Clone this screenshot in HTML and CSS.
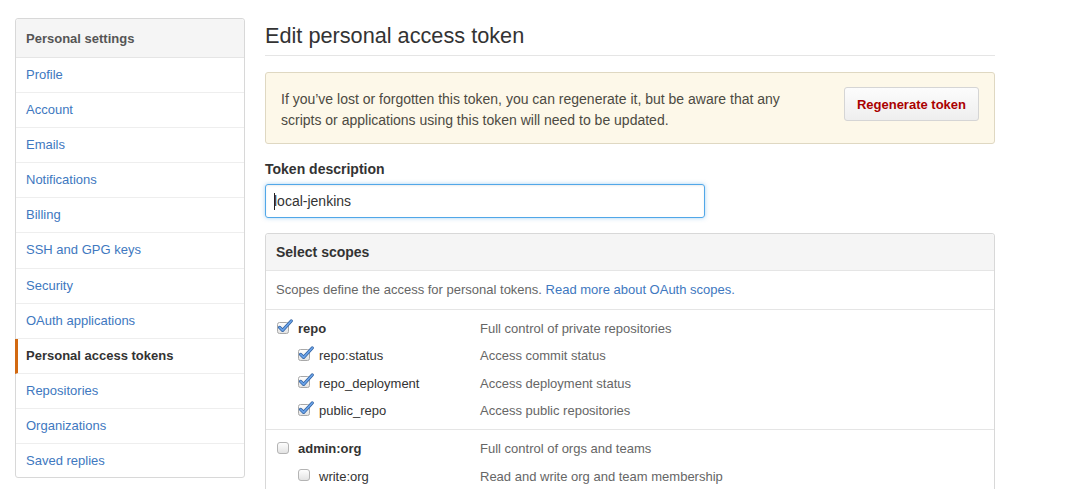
FILE: index.html
```html
<!DOCTYPE html>
<html>
<head>
<meta charset="utf-8">
<link rel="stylesheet" href="styles.css">
</head>
<body>
<div class="page">
  <nav class="menu">
    <div class="menu-heading">Personal settings</div>
    <a class="menu-item" href="#">Profile</a>
    <a class="menu-item" href="#">Account</a>
    <a class="menu-item" href="#">Emails</a>
    <a class="menu-item" href="#">Notifications</a>
    <a class="menu-item" href="#">Billing</a>
    <a class="menu-item" href="#">SSH and GPG keys</a>
    <a class="menu-item" href="#">Security</a>
    <a class="menu-item" href="#">OAuth applications</a>
    <a class="menu-item selected" href="#">Personal access tokens</a>
    <a class="menu-item" href="#">Repositories</a>
    <a class="menu-item" href="#">Organizations</a>
    <a class="menu-item last" href="#">Saved replies</a>
  </nav>

  <main class="main">
    <h2 class="subhead">Edit personal access token</h2>

    <div class="flash">
      <p class="flash-text">If you’ve lost or forgotten this token, you can regenerate it, but be aware that any scripts or applications using this token will need to be updated.</p>
      <button class="btn-danger">Regenerate token</button>
    </div>

    <div class="form-group">
      <label class="label">Token description</label>
      <div class="input"><span class="caret"></span>local-jenkins</div>
    </div>

    <div class="scopes">
      <div class="scopes-head">Select scopes</div>
      <div class="scopes-desc">Scopes define the access for personal tokens. <a href="#">Read more about OAuth scopes.</a></div>

      <div class="scope-group">
        <div class="scope-row">
          <div class="scope-name parent">
            <svg class="cb" width="18" height="16" viewBox="0 0 18 16"><defs><linearGradient id="g1" x1="0" y1="0" x2="0" y2="1"><stop offset="0" stop-color="#ffffff"/><stop offset="1" stop-color="#e2e2e2"/></linearGradient></defs><rect x="0.5" y="3.5" width="11" height="11" rx="2" fill="url(#g1)" stroke="#a8a8a8"/><path d="M2.6 8.4 L5.6 11.4 L14.2 2" fill="none" stroke="#2f5f9e" stroke-width="3.2" stroke-linecap="round" stroke-linejoin="round"/><path d="M2.6 8.4 L5.6 11.4 L14.2 2" fill="none" stroke="#6aa2e8" stroke-width="1.8" stroke-linecap="round" stroke-linejoin="round"/></svg>
            <strong>repo</strong>
          </div>
          <div class="scope-desc">Full control of private repositories</div>
        </div>
        <div class="scope-row">
          <div class="scope-name child">
            <svg class="cb" width="18" height="16" viewBox="0 0 18 16"><rect x="0.5" y="3.5" width="11" height="11" rx="2" fill="url(#g1)" stroke="#a8a8a8"/><path d="M2.6 8.4 L5.6 11.4 L14.2 2" fill="none" stroke="#2f5f9e" stroke-width="3.2" stroke-linecap="round" stroke-linejoin="round"/><path d="M2.6 8.4 L5.6 11.4 L14.2 2" fill="none" stroke="#6aa2e8" stroke-width="1.8" stroke-linecap="round" stroke-linejoin="round"/></svg>
            repo:status
          </div>
          <div class="scope-desc">Access commit status</div>
        </div>
        <div class="scope-row">
          <div class="scope-name child">
            <svg class="cb" width="18" height="16" viewBox="0 0 18 16"><rect x="0.5" y="3.5" width="11" height="11" rx="2" fill="url(#g1)" stroke="#a8a8a8"/><path d="M2.6 8.4 L5.6 11.4 L14.2 2" fill="none" stroke="#2f5f9e" stroke-width="3.2" stroke-linecap="round" stroke-linejoin="round"/><path d="M2.6 8.4 L5.6 11.4 L14.2 2" fill="none" stroke="#6aa2e8" stroke-width="1.8" stroke-linecap="round" stroke-linejoin="round"/></svg>
            repo_deployment
          </div>
          <div class="scope-desc">Access deployment status</div>
        </div>
        <div class="scope-row">
          <div class="scope-name child">
            <svg class="cb" width="18" height="16" viewBox="0 0 18 16"><rect x="0.5" y="3.5" width="11" height="11" rx="2" fill="url(#g1)" stroke="#a8a8a8"/><path d="M2.6 8.4 L5.6 11.4 L14.2 2" fill="none" stroke="#2f5f9e" stroke-width="3.2" stroke-linecap="round" stroke-linejoin="round"/><path d="M2.6 8.4 L5.6 11.4 L14.2 2" fill="none" stroke="#6aa2e8" stroke-width="1.8" stroke-linecap="round" stroke-linejoin="round"/></svg>
            public_repo
          </div>
          <div class="scope-desc">Access public repositories</div>
        </div>
      </div>

      <div class="scope-group">
        <div class="scope-row">
          <div class="scope-name parent">
            <svg class="cb" width="18" height="16" viewBox="0 0 18 16"><rect x="0.5" y="3.5" width="11" height="11" rx="2.5" fill="url(#g1)" stroke="#b4b4b4"/></svg>
            <strong>admin:org</strong>
          </div>
          <div class="scope-desc">Full control of orgs and teams</div>
        </div>
        <div class="scope-row">
          <div class="scope-name child">
            <svg class="cb" width="18" height="16" viewBox="0 0 18 16"><rect x="0.5" y="3.5" width="11" height="11" rx="2.5" fill="url(#g1)" stroke="#b4b4b4"/></svg>
            write:org
          </div>
          <div class="scope-desc">Read and write org and team membership</div>
        </div>
      </div>
    </div>
  </main>
</div>
</body>
</html>
```

FILE: styles.css
```css
* { box-sizing: border-box; }

body {
  margin: 0;
  background: #fff;
  font-family: "Liberation Sans", Arial, Helvetica, sans-serif;
  font-size: 13px;
  color: #333;
}

.page {
  display: flex;
  align-items: flex-start;
  gap: 20px;
  padding: 18px 0 0 15px;
}

/* Sidebar */
.menu {
  width: 230px;
  flex: none;
  border: 1px solid #d8d8d8;
  border-radius: 3px;
  display: flex;
  flex-direction: column;
  background: #fff;
}

.menu-heading {
  padding: 11px 10px 9px;
  line-height: 18px;
  font-size: 13px;
  font-weight: bold;
  color: #555;
  background: #f5f5f5;
  border-bottom: 1px solid #e5e5e5;
  border-radius: 3px 3px 0 0;
}

.menu-item {
  display: block;
  padding: 8px 10px;
  line-height: 18.1px;
  color: #4078c0;
  text-decoration: none;
  border-bottom: 1px solid #eee;
}

.menu-item.last { border-bottom: 0; padding-bottom: 7px; }

.menu-item.selected {
  font-weight: bold;
  color: #333;
  border-left: 3px solid #d26911;
  margin-left: -1px;
  padding-left: 8px;
}

/* Main */
.main {
  width: 730px;
  flex: none;
}

.subhead {
  margin: 0 0 16px;
  padding: 2px 0 4px;
  font-size: 21.7px;
  font-weight: normal;
  line-height: 31px;
  color: #333;
  border-bottom: 1px solid #e5e5e5;
}

.flash {
  display: flex;
  align-items: flex-start;
  justify-content: space-between;
  padding: 14px 15px 12px;
  background: #fdf8e9;
  border: 1px solid #dfd8c2;
  border-radius: 3px;
  color: #4c4a42;
  font-size: 14px;
}

.flash-text {
  margin: 0;
  padding-top: 2px;
  line-height: 21px;
  flex: 1;
  padding-right: 40px;
}

.btn-danger {
  flex: none;
  height: 34px;
  white-space: nowrap;
  font-family: inherit;
  font-size: 13px;
  font-weight: bold;
  color: #a00;
  background: linear-gradient(#fcfcfc, #eee);
  border: 1px solid #d5d5d5;
  border-radius: 3px;
  padding: 0 12px;
}

.form-group {
  margin-top: 15px;
}

.label {
  display: block;
  font-size: 14px;
  font-weight: bold;
  line-height: 20px;
  margin-bottom: 5px;
  color: #333;
}

.input {
  width: 440px;
  height: 34px;
  padding: 0 8px;
  display: flex;
  align-items: center;
  font-size: 14px;
  color: #333;
  border: 1px solid #51a7e8;
  border-radius: 3px;
  box-shadow: inset 0 1px 2px rgba(0,0,0,0.075), 0 0 4px rgba(81,167,232,0.5);
}

.caret {
  display: inline-block;
  width: 1px;
  height: 17px;
  background: #222;
  margin-right: -1px;
}

/* Scopes */
.scopes {
  margin-top: 15px;
  border: 1px solid #d8d8d8;
  border-radius: 3px;
}

.scopes-head {
  padding: 9px 10px;
  line-height: 18px;
  font-size: 14px;
  font-weight: bold;
  color: #333;
  background: #f5f5f5;
  border-bottom: 1px solid #e5e5e5;
  border-radius: 3px 3px 0 0;
}

.scopes-desc {
  padding: 10px;
  line-height: 18px;
  color: #666;
}

.scopes-desc a {
  color: #4078c0;
  text-decoration: none;
}

.scope-group {
  border-top: 1px solid #e5e5e5;
  padding: 5px 11px 5px 11px;
}

.scope-row {
  display: flex;
  align-items: center;
  height: 27.3px;
}

.scope-name {
  width: 203px;
  flex: none;
  display: flex;
  align-items: center;
  gap: 3px;
  color: #333;
}

.scope-name.child { padding-left: 21px; }

.cb {
  flex: none;
  display: block;
  margin-top: -4px;
}

.scope-desc {
  color: #666;
}
```
